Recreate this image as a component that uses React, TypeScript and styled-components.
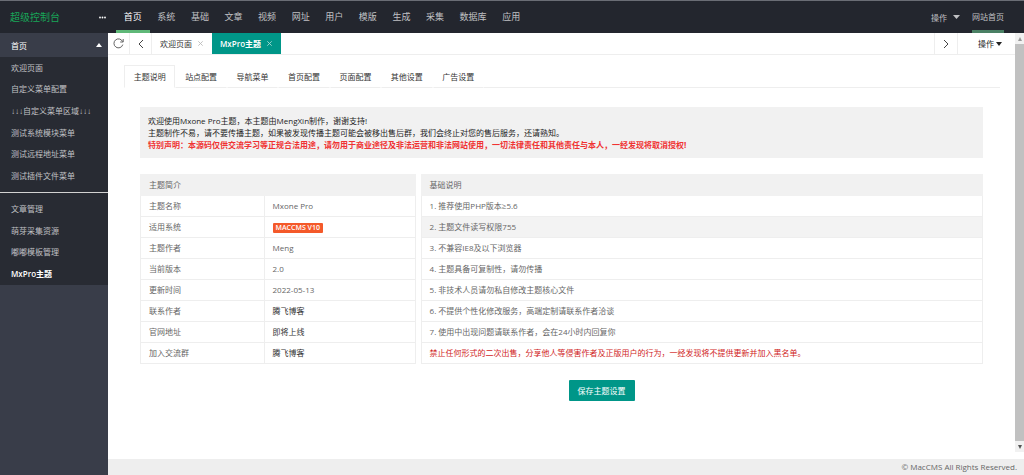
import React from "react";
import styled, { createGlobalStyle, css } from "styled-components";

const c = {
  bar: "#23262e",
  side: "#393d49",
  group: "#282b33",
  teal: "#009688",
  green: "#5fb878",
  line: "#eeeeee",
  soft: "#f1f1f1",
  text: "#666666",
  dark: "#333333",
};

const Global = createGlobalStyle`
  *, *::before, *::after { box-sizing: border-box; }
  body { margin: 0; background: #fff; }
  body, button { font-family: "Open Sans", "Noto Sans CJK SC", sans-serif; font-size: 8px; }
  button { border: 0; padding: 0; margin: 0; background: none; color: inherit; cursor: pointer; }
  a { color: inherit; text-decoration: none; }
  ul { list-style: none; margin: 0; padding: 0; }
  p { margin: 0; }
  svg { display: block; flex: none; }
`;

const Page = styled.div`
  min-height: 100vh;
  display: flex;
  flex-direction: column;
  line-height: 12px;
  color: ${c.text};
`;

const TopBar = styled.header`
  display: flex;
  align-items: stretch;
  height: 33px;
  background: ${c.bar};
  border-top: 1px solid #6a6d75;
  color: #c0c1c4;
`;

const Brand = styled.div`
  display: flex;
  align-items: center;
  justify-content: space-between;
  width: 116px;
  padding: 0 10px;
  font-size: 10px;
  color: #18a558;
`;

const MoreButton = styled.button`
  color: #fff;
  line-height: 0;
`;

const MainNav = styled.nav`
  display: flex;
  flex: 0 1 412px;
`;

const NavLink = styled.a<{ $active?: boolean }>`
  flex: 1 1 auto;
  display: flex;
  align-items: center;
  justify-content: center;
  font-size: 9px;
  white-space: nowrap;
  border-bottom: 3px solid ${(p) => (p.$active ? c.green : "transparent")};
  padding-top: 3px;
  ${(p) => p.$active && css`color: #fff;`}
`;

const UserNav = styled.nav`
  display: flex;
  margin-left: auto;
  padding-right: 20px;
  gap: 12px;
`;

const MenuButton = styled.button`
  display: flex;
  align-items: center;
  gap: 6px;
`;

const HomeLink = styled.a`
  display: flex;
  align-items: center;
  padding-top: 3px;
  border-bottom: 3px solid #4a8064;
`;

const Body = styled.div`
  flex: 1;
  display: flex;
`;

const SideBar = styled.aside`
  flex: none;
  width: 108px;
  background: ${c.side};
  color: #c0c1c4;
`;

const SideTitle = styled.button`
  display: flex;
  align-items: center;
  justify-content: space-between;
  width: 100%;
  height: 24px;
  padding: 0 6px 0 11px;
  color: #fff;
`;

const SideGroup = styled.div`
  background: ${c.group};
`;

const SideList = styled.ul<{ $height: number }>`
  display: grid;
  grid-auto-rows: 1fr;
  min-height: ${(p) => p.$height}px;
`;

const SideLink = styled.a<{ $active?: boolean }>`
  display: flex;
  align-items: center;
  height: 100%;
  padding-left: 11px;
  font-family: "Open Sans", "Liberation Sans", "Noto Sans CJK SC", sans-serif;
  white-space: nowrap;
  ${(p) => p.$active && css`color: #fff; font-weight: 600;`}
`;

const SideRule = styled.hr`
  margin: 5px 0;
  border: 0;
  border-top: 1px solid #d2d2d2;
`;

const Work = styled.div`
  flex: 1;
  min-width: 0;
  display: flex;
  flex-direction: column;
`;

const Frame = styled.div`
  flex: 1;
  display: flex;
`;

const Panel = styled.main`
  flex: 1;
  min-width: 0;
`;

const PageTabs = styled.div`
  display: flex;
  height: 22px;
  border-bottom: 1px solid ${c.line};
  color: ${c.dark};
`;

const IconCell = styled.button`
  display: flex;
  align-items: center;
  justify-content: center;
  width: 22px;
  border-right: 1px solid ${c.line};
`;

const NextCell = styled(IconCell)`
  width: 24px;
  margin-left: auto;
  border-left: 1px solid ${c.line};
`;

const PageTab = styled.div<{ $active?: boolean }>`
  display: flex;
  align-items: center;
  gap: 6px;
  padding: 0 9px 0 8px;
  color: ${(p) => (p.$active ? "#fff" : c.dark)};
  background: ${(p) => (p.$active ? c.teal : "transparent")};
  font-weight: ${(p) => (p.$active ? 600 : 400)};
  white-space: nowrap;
`;

const CloseButton = styled.button<{ $light?: boolean }>`
  color: ${(p) => (p.$light ? "#a5d8d3" : "#bbbbbb")};
`;

const TabActions = styled.button`
  display: flex;
  align-items: center;
  justify-content: flex-end;
  gap: 2px;
  width: 57px;
  padding-right: 13px;
  color: #222;
`;

const SubTabs = styled.div`
  display: flex;
  margin: 10px 15px 0 16px;
  height: 23px;
  color: ${c.dark};
`;

const SubTabGroup = styled.div`
  display: flex;
  flex: 0 1 360px;
`;

const SubTab = styled.button<{ $active?: boolean }>`
  flex: 1;
  white-space: nowrap;
  border: 1px solid transparent;
  border-bottom-color: ${c.line};
  ${(p) => p.$active && css`border-color: ${c.line} ${c.line} transparent;`}
`;

const SubTabsRest = styled.div`
  flex: 1;
  border-bottom: 1px solid ${c.line};
`;

const Content = styled.section`
  padding: 19px 32px 0;
`;

const Notice = styled.div`
  padding: 8px 8px 7px;
  background: ${c.soft};
  color: #222;
`;

const Warning = styled.p`
  color: #f03232;
  font-weight: 700;
`;

const Tables = styled.div`
  display: grid;
  grid-template-columns: 49fr 100fr;
  gap: 5px;
  align-items: start;
  margin-top: 16px;
`;

const Table = styled.table`
  width: 100%;
  table-layout: fixed;
  border-collapse: collapse;
  th, td {
    height: 21px;
    padding: 0 8px;
    border: 1px solid ${c.line};
    text-align: left;
    font-weight: 400;
    white-space: nowrap;
  }
  thead th {
    background: ${c.soft};
    border-color: ${c.soft};
  }
`;

const Row = styled.tr<{ $hover?: boolean }>`
  background: ${(p) => (p.$hover ? "#f3f3f3" : "transparent")};
`;

const LabelCol = styled.col`
  width: 45%;
`;

const Badge = styled.span`
  display: inline-block;
  padding: 0 3px;
  line-height: 10px;
  border-radius: 1px;
  background: #f4592a;
  color: #fff;
  font-size: 7px;
  font-weight: 600;
  vertical-align: middle;
`;

const CellLink = styled.a`
  color: ${c.dark};
`;

const RedText = styled.span`
  color: #d01c1c;
`;

const Actions = styled.div`
  display: flex;
  justify-content: center;
  padding: 16px 0 16px 80px;
`;

const SaveButton = styled.button`
  height: 21px;
  padding: 0 9px;
  border-radius: 1px;
  background: ${c.teal};
  color: #fff;
`;

const ScrollTrack = styled.div`
  display: flex;
  flex-direction: column;
  width: 9px;
  margin-bottom: 7px;
  background: ${c.soft};
`;

const ScrollArrow = styled.div`
  display: flex;
  align-items: center;
  justify-content: center;
  height: 11px;
`;

const ScrollThumb = styled.div`
  flex: 1;
  background: #c1c1c1;
`;

const Footer = styled.footer`
  height: 16px;
  padding-right: 7px;
  line-height: 16px;
  text-align: right;
  background: #eeeeee;
`;

const Caret = ({ up, w = 7, color = "currentColor" }: { up?: boolean; w?: number; color?: string }) => (
  <svg width={w} height="4" viewBox="0 0 7 4" preserveAspectRatio="none" fill={color} aria-hidden="true">
    <path d={up ? "M0 4L3.5 0L7 4Z" : "M0 0L3.5 4L7 0Z"} />
  </svg>
);

const Chevron = ({ right }: { right?: boolean }) => (
  <svg width="6" height="10" viewBox="0 0 6 10" fill="none" stroke="#444" strokeWidth="1" aria-hidden="true">
    <path d={right ? "M1 1L5 5L1 9" : "M5 1L1 5L5 9"} />
  </svg>
);

const Refresh = () => (
  <svg width="11" height="11" viewBox="0 0 11 11" fill="none" stroke="#555" strokeWidth="0.9" aria-hidden="true">
    <path d="M9.6 3.6A4.5 4.5 0 1 0 9.8 6.6M10.2 1V4H7.2" />
  </svg>
);

const Cross = () => (
  <svg width="5" height="5" viewBox="0 0 5 5" stroke="currentColor" strokeWidth="0.9" aria-hidden="true">
    <path d="M0.3 0.3L4.7 4.7M4.7 0.3L0.3 4.7" />
  </svg>
);

const Dots = () => (
  <svg width="7" height="3" viewBox="0 0 7 3" fill="currentColor" aria-hidden="true">
    <circle cx="1" cy="1.5" r="0.9" />
    <circle cx="3.5" cy="1.5" r="0.9" />
    <circle cx="6" cy="1.5" r="0.9" />
  </svg>
);

const nav = ["首页", "系统", "基础", "文章", "视频", "网址", "用户", "模版", "生成", "采集", "数据库", "应用"];
const sideTop = ["欢迎页面", "自定义菜单配置", "↓↓↓自定义菜单区域↓↓↓", "测试系统模块菜单", "测试远程地址菜单", "测试插件文件菜单"];
const sideBottom = ["文章管理", "萌芽采集资源", "嘟嘟模板管理", "MxPro主题"];
const subTabs = ["主题说明", "站点配置", "导航菜单", "首页配置", "页面配置", "其他设置", "广告设置"];
const info: [string, React.ReactNode][] = [
  ["主题名称", "Mxone Pro"],
  ["适用系统", <Badge>MACCMS V10</Badge>],
  ["主题作者", "Meng"],
  ["当前版本", "2.0"],
  ["更新时间", "2022-05-13"],
  ["联系作者", <CellLink href="#">腾飞博客</CellLink>],
  ["官网地址", <CellLink href="#">即将上线</CellLink>],
  ["加入交流群", <CellLink href="#">腾飞博客</CellLink>],
];
const notes: React.ReactNode[] = [
  "1. 推荐使用PHP版本≥5.6",
  "2. 主题文件读写权限755",
  "3. 不兼容IE8及以下浏览器",
  "4. 主题具备可复制性，请勿传播",
  "5. 非技术人员请勿私自修改主题核心文件",
  "6. 不提供个性化修改服务，高端定制请联系作者洽谈",
  "7. 使用中出现问题请联系作者，会在24小时内回复你",
  <RedText>禁止任何形式的二次出售，分享他人等侵害作者及正版用户的行为，一经发现将不提供更新并加入黑名单。</RedText>,
];

export default function App() {
  return (
    <Page lang="zh-CN">
      <Global />
      <TopBar>
        <Brand>
          超级控制台
          <MoreButton aria-label="更多"><Dots /></MoreButton>
        </Brand>
        <MainNav>
          {nav.map((n, i) => (
            <NavLink key={n} href="#" $active={i === 0}>{n}</NavLink>
          ))}
        </MainNav>
        <UserNav>
          <MenuButton>操作<Caret /></MenuButton>
          <HomeLink href="#">网站首页</HomeLink>
        </UserNav>
      </TopBar>
      <Body>
        <SideBar>
          <SideTitle>首页<Caret up w={6} /></SideTitle>
          <SideGroup>
            <SideList $height={130}>
              {sideTop.map((s) => (
                <li key={s}><SideLink href="#">{s}</SideLink></li>
              ))}
            </SideList>
            <SideRule />
            <SideList $height={87}>
              {sideBottom.map((s, i) => (
                <li key={s}><SideLink href="#" $active={i === 3}>{s}</SideLink></li>
              ))}
            </SideList>
          </SideGroup>
        </SideBar>
        <Work>
          <Frame>
            <Panel>
              <PageTabs>
                <IconCell aria-label="刷新"><Refresh /></IconCell>
                <IconCell aria-label="向左"><Chevron /></IconCell>
                <PageTab>
                  <a href="#">欢迎页面</a>
                  <CloseButton aria-label="关闭"><Cross /></CloseButton>
                </PageTab>
                <PageTab $active>
                  <a href="#">MxPro主题</a>
                  <CloseButton $light aria-label="关闭"><Cross /></CloseButton>
                </PageTab>
                <NextCell aria-label="向右"><Chevron right /></NextCell>
                <TabActions>操作<Caret w={6} /></TabActions>
              </PageTabs>
              <SubTabs>
                <SubTabGroup>
                  {subTabs.map((t, i) => (
                    <SubTab key={t} $active={i === 0}>{t}</SubTab>
                  ))}
                </SubTabGroup>
                <SubTabsRest />
              </SubTabs>
              <Content>
                <Notice>
                  <p>欢迎使用Mxone Pro主题，本主题由MengXin制作，谢谢支持!</p>
                  <p>主题制作不易，请不要传播主题，如果被发现传播主题可能会被移出售后群，我们会终止对您的售后服务，还请熟知。</p>
                  <Warning>特别声明：本源码仅供交流学习等正规合法用途，请勿用于商业途径及非法运营和非法网站使用，一切法律责任和其他责任与本人，一经发现将取消授权!</Warning>
                </Notice>
                <Tables>
                  <Table>
                    <colgroup><LabelCol /><col /></colgroup>
                    <thead><tr><th colSpan={2}>主题简介</th></tr></thead>
                    <tbody>
                      {info.map(([k, v]) => (
                        <Row key={k}><th scope="row">{k}</th><td>{v}</td></Row>
                      ))}
                    </tbody>
                  </Table>
                  <Table>
                    <thead><tr><th>基础说明</th></tr></thead>
                    <tbody>
                      {notes.map((n, i) => (
                        <Row key={i} $hover={i === 1}><td>{n}</td></Row>
                      ))}
                    </tbody>
                  </Table>
                </Tables>
                <Actions><SaveButton>保存主题设置</SaveButton></Actions>
              </Content>
            </Panel>
            <ScrollTrack aria-hidden="true">
              <ScrollArrow><Caret up w={4} color="#999" /></ScrollArrow>
              <ScrollThumb />
              <ScrollArrow><Caret w={4} color="#555" /></ScrollArrow>
            </ScrollTrack>
          </Frame>
          <Footer>© MacCMS All Rights Reserved.</Footer>
        </Work>
      </Body>
    </Page>
  );
}
